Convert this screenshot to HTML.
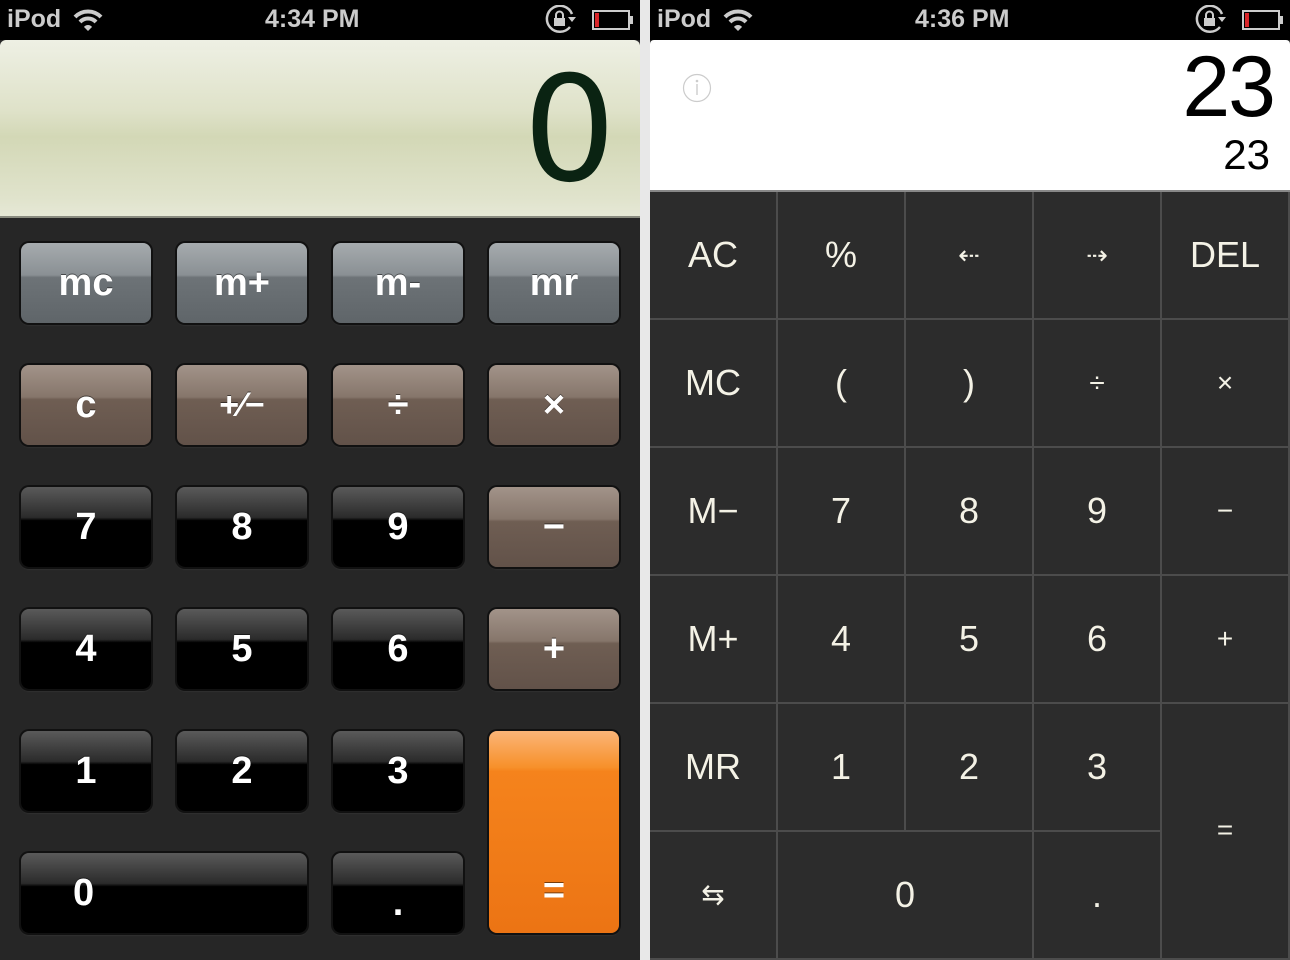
<!DOCTYPE html>
<html style="width:1290px;height:960px;overflow:hidden"><head><meta charset="utf-8"><style>
*{margin:0;padding:0;box-sizing:border-box}
body{width:1290px;height:960px;background:#e8e8e8;position:relative;overflow:hidden;font-family:"Liberation Sans",sans-serif}
.sb{position:absolute;top:0;height:40px;background:#000;color:#ccc;font-weight:bold;font-size:25px}
.sb span{position:absolute;top:5px}
.left{position:absolute;left:0;top:40px;width:640px;height:920px;background:#262626}
.disp{position:absolute;left:0;top:0;width:640px;height:178px;border-radius:6px 6px 0 0;background:linear-gradient(#eef0e4 0%,#dfe2c9 40%,#d3d8b6 55%,#e0e3cc 90%,#e6e8d6 100%);border-bottom:2px solid #8a8c80}
.disp .n{position:absolute;right:24px;top:10px;font-size:146px;color:#0a2312;font-family:"DejaVu Sans","Liberation Sans",sans-serif;line-height:1.1}
.b{position:absolute;width:130px;height:80px;border-radius:8px;color:#fff;font-weight:bold;font-size:38px;text-align:center;line-height:80px;box-shadow:0 0 0 2px #111,0 2px 2px rgba(255,255,255,.12);text-shadow:0 -1px 0 rgba(0,0,0,.5)}
.g{background:linear-gradient(#a6abae 0%,#8a9094 40%,#6d7377 43%,#5f6569 100%)}
.br{background:linear-gradient(#a29389 0%,#86766b 40%,#6f5e53 43%,#625249 100%)}
.k{background:linear-gradient(#5a5a5a 0%,#2b2b2b 38%,#000 42%,#000 100%)}
.o{background:linear-gradient(#fbb577 0%,#f7902a 18%,#f5831c 20%,#ec7414 100%)}
.right{position:absolute;left:650px;top:40px;width:640px;height:920px;background:#2c2c2c}
.rd{position:absolute;left:0;top:0;width:640px;height:152px;background:#fff;border-radius:4px 4px 0 0;border-bottom:2px solid #888}
.c{position:absolute;width:128px;height:128px;border-right:2px solid #4c4c4c;border-bottom:2px solid #4c4c4c;color:#f4f2e6;font-size:36px;text-align:center;line-height:126px;font-family:"Liberation Sans",sans-serif;font-weight:normal}
</style></head><body>
<div class="sb" style="left:0;width:640px"><span style="left:7px">iPod</span>
<svg style="position:absolute;left:72px;top:8px" width="32" height="24" viewBox="0 0 32 24"><path d="M3 9a18 18 0 0 1 26 0" stroke="#ccc" stroke-width="4" fill="none"/><path d="M8 14a11 11 0 0 1 16 0" stroke="#ccc" stroke-width="4" fill="none"/><path d="M16 23l-4-4a5 5 0 0 1 8 0z" fill="#ccc"/></svg>
<span style="left:265px">4:34 PM</span>
<svg style="position:absolute;left:544px;top:5px" width="36" height="30" viewBox="0 0 36 30"><path d="M26 22A13 13 0 1 1 28 9" stroke="#ccc" stroke-width="2.5" fill="none"/><path d="M24 12h8l-4 5z" fill="#ccc"/><rect x="10" y="13" width="11" height="8" fill="#ccc"/><path d="M12 13v-3a3.5 3.5 0 0 1 7 0v3" stroke="#ccc" stroke-width="2" fill="none"/></svg>
<svg style="position:absolute;left:592px;top:10px" width="42" height="20" viewBox="0 0 42 20"><rect x="1" y="1" width="36" height="18" stroke="#ccc" stroke-width="2" fill="none"/><rect x="38" y="6" width="3" height="8" fill="#ccc"/><rect x="3" y="3" width="4" height="14" fill="#d8262a"/></svg>
</div>
<div class="left">
<div class="disp"><div class="n">0</div></div>
<div class="b g" style="left:21px;top:203px">mc</div>
<div class="b g" style="left:177px;top:203px">m+</div>
<div class="b g" style="left:333px;top:203px">m-</div>
<div class="b g" style="left:489px;top:203px">mr</div>
<div class="b br" style="left:21px;top:325px">c</div>
<div class="b br" style="left:177px;top:325px;font-size:34px">+⁄−</div>
<div class="b br" style="left:333px;top:325px">÷</div>
<div class="b br" style="left:489px;top:325px">×</div>
<div class="b k" style="left:21px;top:447px">7</div>
<div class="b k" style="left:177px;top:447px">8</div>
<div class="b k" style="left:333px;top:447px">9</div>
<div class="b br" style="left:489px;top:447px">−</div>
<div class="b k" style="left:21px;top:569px">4</div>
<div class="b k" style="left:177px;top:569px">5</div>
<div class="b k" style="left:333px;top:569px">6</div>
<div class="b br" style="left:489px;top:569px">+</div>
<div class="b k" style="left:21px;top:691px">1</div>
<div class="b k" style="left:177px;top:691px">2</div>
<div class="b k" style="left:333px;top:691px">3</div>
<div class="b o" style="left:489px;top:691px;height:202px;line-height:320px">=</div>
<div class="b k" style="left:21px;top:813px;width:286px;text-align:left;padding-left:52px">0</div>
<div class="b k" style="left:333px;top:813px;line-height:100px">.</div>
</div>
<div class="sb" style="left:650px;width:640px"><span style="left:7px">iPod</span>
<svg style="position:absolute;left:72px;top:8px" width="32" height="24" viewBox="0 0 32 24"><path d="M3 9a18 18 0 0 1 26 0" stroke="#ccc" stroke-width="4" fill="none"/><path d="M8 14a11 11 0 0 1 16 0" stroke="#ccc" stroke-width="4" fill="none"/><path d="M16 23l-4-4a5 5 0 0 1 8 0z" fill="#ccc"/></svg>
<span style="left:265px">4:36 PM</span>
<svg style="position:absolute;left:544px;top:5px" width="36" height="30" viewBox="0 0 36 30"><path d="M26 22A13 13 0 1 1 28 9" stroke="#ccc" stroke-width="2.5" fill="none"/><path d="M24 12h8l-4 5z" fill="#ccc"/><rect x="10" y="13" width="11" height="8" fill="#ccc"/><path d="M12 13v-3a3.5 3.5 0 0 1 7 0v3" stroke="#ccc" stroke-width="2" fill="none"/></svg>
<svg style="position:absolute;left:592px;top:10px" width="42" height="20" viewBox="0 0 42 20"><rect x="1" y="1" width="36" height="18" stroke="#ccc" stroke-width="2" fill="none"/><rect x="38" y="6" width="3" height="8" fill="#ccc"/><rect x="3" y="3" width="4" height="14" fill="#d8262a"/></svg>
</div>
<div class="right">
<div class="rd">
<svg style="position:absolute;left:32px;top:33px" width="30" height="30"><circle cx="15" cy="15" r="13.5" stroke="#ccc" stroke-width="1.2" fill="none"/><circle cx="15" cy="8" r="1.3" fill="#ccc"/><rect x="14.3" y="11" width="1.4" height="11" fill="#ccc"/></svg>
<div style="position:absolute;right:16px;top:0;font-size:86px;color:#000;font-family:'Liberation Sans',sans-serif;letter-spacing:-2px;line-height:1.1">23</div>
<div style="position:absolute;right:20px;top:92px;font-size:42px;color:#000;font-family:'Liberation Sans',sans-serif;line-height:1.1">23</div>
</div>
<div class="c" style="left:0;top:152px">AC</div>
<div class="c" style="left:128px;top:152px">%</div>
<div class="c" style="left:256px;top:152px;font-size:26px">⇠</div>
<div class="c" style="left:384px;top:152px;font-size:26px">⇢</div>
<div class="c" style="left:512px;top:152px">DEL</div>
<div class="c" style="left:0;top:280px">MC</div>
<div class="c" style="left:128px;top:280px">(</div>
<div class="c" style="left:256px;top:280px">)</div>
<div class="c" style="left:384px;top:280px;font-size:28px">÷</div>
<div class="c" style="left:512px;top:280px;font-size:28px">×</div>
<div class="c" style="left:0;top:408px">M−</div>
<div class="c" style="left:128px;top:408px">7</div>
<div class="c" style="left:256px;top:408px">8</div>
<div class="c" style="left:384px;top:408px">9</div>
<div class="c" style="left:512px;top:408px;font-size:28px">−</div>
<div class="c" style="left:0;top:536px">M+</div>
<div class="c" style="left:128px;top:536px">4</div>
<div class="c" style="left:256px;top:536px">5</div>
<div class="c" style="left:384px;top:536px">6</div>
<div class="c" style="left:512px;top:536px;font-size:28px">+</div>
<div class="c" style="left:0;top:664px">MR</div>
<div class="c" style="left:128px;top:664px">1</div>
<div class="c" style="left:256px;top:664px">2</div>
<div class="c" style="left:384px;top:664px">3</div>
<div class="c" style="left:512px;top:664px;height:256px;line-height:252px;font-size:28px">=</div>
<div class="c" style="left:0;top:792px;font-size:28px">⇆</div>
<div class="c" style="left:128px;top:792px;width:256px">0</div>
<div class="c" style="left:384px;top:792px">.</div>
</div>
</body></html>
